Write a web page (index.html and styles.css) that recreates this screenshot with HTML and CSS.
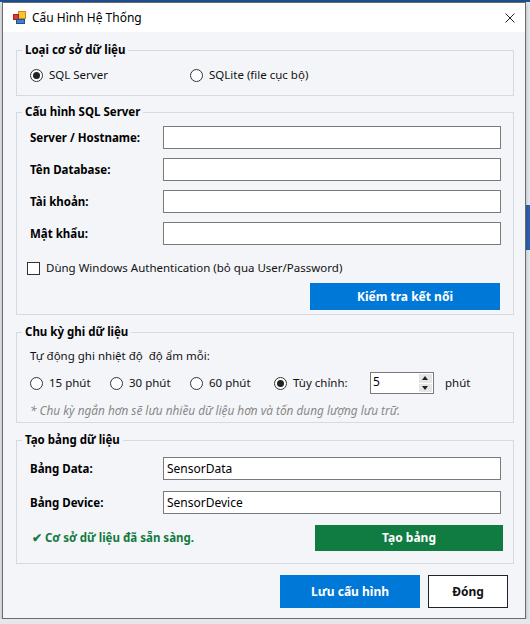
FILE: index.html
```html
<!doctype html>
<html lang="vi">
<head>
  <meta charset="utf-8">
  <title>Cấu Hình Hệ Thống</title>
  <link rel="stylesheet" href="styles.css">
</head>
<body>

<div class="window">
  <div class="titlebar">
    <svg class="app-icon" width="13" height="13" viewBox="0 0 13 13">
      <rect x="5.5" y="0.5" width="7" height="7" fill="#f7c531" stroke="#c98a12"/>
      <rect x="0.5" y="3.5" width="5" height="5" fill="#e0392b" stroke="#a3241a"/>
      <rect x="3.5" y="8.5" width="8" height="4" fill="#3f7fd6" stroke="#1f4f9a"/>
    </svg>
    <span class="title">Cấu Hình Hệ Thống</span>
    <svg class="close" width="10" height="10" viewBox="0 0 10 10">
      <path d="M0.5 0.5 L9.5 9.5 M9.5 0.5 L0.5 9.5" stroke="#222" stroke-width="1"/>
    </svg>
  </div>

  <div class="content">

    <!-- database type -->
    <section class="group group-type">
      <div class="group-title">Loại cơ sở dữ liệu</div>
      <div class="option-row">
        <span class="radio checked w160"><i></i>SQL Server</span>
        <span class="radio"><i></i>SQLite (file cục bộ)</span>
      </div>
    </section>

    <!-- sql server connection -->
    <section class="group group-sql">
      <div class="group-title">Cấu hình SQL Server</div>
      <div class="field"><label>Server / Hostname:</label><input type="text"></div>
      <div class="field"><label>Tên Database:</label><input type="text"></div>
      <div class="field"><label>Tài khoản:</label><input type="text"></div>
      <div class="field"><label>Mật khẩu:</label><input type="password"></div>
      <div class="check-row"><span class="checkbox"></span>Dùng Windows Authentication (bỏ qua User/Password)</div>
      <div class="action-row">
        <button class="btn btn-blue btn-test">Kiểm tra kết nối</button>
      </div>
    </section>

    <!-- logging interval -->
    <section class="group group-interval">
      <div class="group-title">Chu kỳ ghi dữ liệu</div>
      <div class="line">Tự động ghi nhiệt độ&nbsp; độ ẩm mỗi:</div>
      <div class="option-row interval-row">
        <span class="radio w80"><i></i>15 phút</span>
        <span class="radio w80"><i></i>30 phút</span>
        <span class="radio w84"><i></i>60 phút</span>
        <span class="radio checked w96"><i></i>Tùy chỉnh:</span>
        <span class="spinner">
          <span class="spin-value">5</span>
          <span class="spin-buttons">
            <span class="spin-up"></span>
            <span class="spin-down"></span>
          </span>
        </span>
        <span class="unit">phút</span>
      </div>
      <div class="note">* Chu kỳ ngắn hơn sẽ lưu nhiều dữ liệu hơn và tốn dung lượng lưu trữ.</div>
    </section>

    <!-- table creation -->
    <section class="group group-tables">
      <div class="group-title">Tạo bảng dữ liệu</div>
      <div class="field"><label>Bảng Data:</label><input type="text" value="SensorData"></div>
      <div class="field"><label>Bảng Device:</label><input type="text" value="SensorDevice"></div>
      <div class="status-row">
        <span class="status">✔ Cơ sở dữ liệu đã sẵn sàng.</span>
        <button class="btn btn-green btn-create">Tạo bảng</button>
      </div>
    </section>

    <div class="footer">
      <button class="btn btn-blue btn-save">Lưu cấu hình</button>
      <button class="btn btn-close">Đóng</button>
    </div>

  </div>
</div>

</body>
</html>
```

FILE: styles.css
```css
/* Desktop behind the dialog */
html {
  background:
    linear-gradient(#1d4f91, #1d4f91) 0 0 / 100% 2px no-repeat,
    linear-gradient(#2b62b0, #2b62b0) right 205px / 4px 45px no-repeat,
    #e4e7ec;
}

body {
  margin: 0;
  color: #111;
  font-family: "Noto Sans", "Open Sans", sans-serif;
  font-size: 11.5px;
  line-height: 16px;
}

.window {
  margin: 2px 0 0 2px;
  width: 522px;
  height: 615px;
  background: #f4f5f9;
  border: 1px solid #6b6b6b;
  box-shadow: 0 2px 4px rgba(0, 0, 0, 0.25);
}

/* Title bar */
.titlebar {
  display: flex;
  align-items: center;
  height: 29px;
  padding: 0 10px 0 10px;
  background: #fff;
}

.app-icon {
  margin-right: 6px;
}

.title {
  flex: 1;
  font-size: 12px;
  color: #000;
}

.content {
  padding: 18px 11px 0 13px;
}

/* Group boxes */
.group {
  border: 1px solid #d6d9df;
  padding: 0 12px 12px 13px;
}

.group + .group {
  margin-top: 16px;
}

.group-interval,
.group-tables {
  margin-top: 17px !important;
}

.group-title {
  display: table;
  margin: -9px 0 0 -8px;
  padding: 0 3px;
  background: #f4f5f9;
  font-weight: 700;
  color: #000;
}

.option-row {
  display: flex;
  align-items: center;
  height: 16px;
  margin-top: 9px;
}

/* Radio buttons and check box */
.radio {
  display: flex;
  align-items: center;
}

.radio i {
  display: flex;
  align-items: center;
  justify-content: center;
  width: 13px;
  height: 13px;
  margin-right: 6px;
  border: 1px solid #333;
  border-radius: 50%;
  background: #fff;
  box-sizing: border-box;
}

.radio.checked i::after {
  content: "";
  width: 7px;
  height: 7px;
  border-radius: 50%;
  background: #222;
}

.w80 { width: 80px; }
.w84 { width: 84px; }
.w96 { width: 96px; }
.w160 { width: 160px; }

.checkbox {
  display: inline-block;
  width: 13px;
  height: 13px;
  margin: 0 6px 0 -3px;
  border: 1px solid #333;
  background: #fff;
  box-sizing: border-box;
}

.check-row {
  display: flex;
  align-items: center;
  height: 16px;
  margin-top: 15px;
}

/* Labelled text fields */
.field {
  display: flex;
  align-items: center;
  height: 23px;
  margin-top: 9px;
}

.group-sql .group-title + .field {
  margin-top: 6px;
}

.group-tables .field {
  margin-top: 11px;
}

.group-tables .group-title + .field {
  margin-top: 9px;
}

.field label {
  width: 133px;
  font-weight: 700;
  color: #000;
}

.field input {
  flex: 1;
  height: 23px;
  margin: 0;
  padding: 0 3px;
  border: 1px solid #7a7a7a;
  background: #fff;
  font: inherit;
  font-size: 12px;
  color: #000;
  box-sizing: border-box;
  outline: none;
}

/* Buttons */
.btn {
  margin: 0;
  padding: 0;
  border: 0;
  font: inherit;
  font-size: 12px;
  font-weight: 700;
  cursor: pointer;
}

.btn-blue {
  background: #0078d7;
  color: #fff;
}

.btn-green {
  background: #107c41;
  color: #fff;
}

.action-row {
  display: flex;
  justify-content: flex-end;
  margin-top: 7px;
}

.group-sql {
  padding-bottom: 4px;
}

.btn-test {
  width: 190px;
  height: 27px;
  margin-right: 1px;
}

/* Interval */
.line {
  margin-top: 8px;
}

.interval-row {
  height: 22px;
  margin-top: 8px;
}

.spinner {
  display: flex;
  width: 64px;
  height: 22px;
  border: 1px solid #7a7a7a;
  background: #fff;
  box-sizing: border-box;
}

.spin-value {
  flex: 1;
  padding-left: 2px;
  line-height: 18px;
  font-size: 12px;
  color: #000;
}

.spin-buttons {
  display: flex;
  flex-direction: column;
  width: 13px;
  margin: 1px 1px 1px 0;
  gap: 1px;
}

.spin-up,
.spin-down {
  flex: 1;
  position: relative;
  background: #e6e6e6;
}

.spin-up::after,
.spin-down::after {
  content: "";
  position: absolute;
  left: 3px;
  border: 3.5px solid transparent;
}

.spin-up::after {
  top: -1px;
  border-bottom: 4px solid #222;
}

.spin-down::after {
  top: 2px;
  border-top: 4px solid #222;
}

.unit {
  margin-left: 11px;
}

.note {
  margin-top: 8px;
  font-size: 11.8px;
  font-style: italic;
  color: #888;
}

.group-interval {
  padding-bottom: 4px;
}

/* Table creation */
.status-row {
  display: flex;
  align-items: center;
  justify-content: space-between;
  margin-top: 11px;
}

.status {
  margin-left: 2px;
  font-weight: 700;
  color: #127a3c;
}

.btn-create {
  width: 188px;
  height: 26px;
  margin-right: -2px;
}

/* Dialog buttons */
.footer {
  display: flex;
  justify-content: flex-end;
  gap: 8px;
  margin-top: 11px;
  padding-right: 6px;
}

.btn-save {
  width: 140px;
  height: 33px;
}

.btn-close {
  width: 80px;
  height: 33px;
  background: #fff;
  border: 1px solid #222;
  color: #111;
}
```
